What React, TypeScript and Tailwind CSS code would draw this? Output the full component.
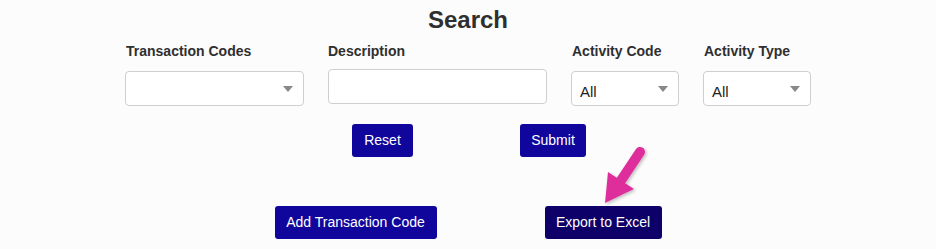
import React from "react"

function Caret() {
  return (
    <svg width="10" height="6" viewBox="0 0 10 6" className="absolute right-[10px] top-1/2 -translate-y-1/2">
      <path d="M0 0 L10 0 L5 6 Z" fill="#888" />
    </svg>
  )
}

function SelectBox({ width, value }: { width: string; value?: string }) {
  return (
    <div className={`relative ${width} h-[35px] rounded-[4px] border border-[#cfcfcf] bg-white`}>
      {value && (
        <span className="absolute left-[8px] top-[11px] text-[15px] leading-[18px] text-[#222]">{value}</span>
      )}
      <Caret />
    </div>
  )
}

export default function App() {
  const font = { fontFamily: '"Liberation Sans", Arial, sans-serif' }
  return (
    <div className="w-[936px] h-[249px] bg-[#fcfcfc] relative overflow-hidden" style={font}>
      <h1 className="text-center text-[24px] leading-[28px] font-bold text-[#2f2f2f] pt-[6px]">Search</h1>

      <div className="flex justify-center gap-6 mt-[9px]">
        <div className="flex flex-col">
          <label className="text-[14px] font-bold text-[#2f2f2f] leading-[16px] pl-[1px]">Transaction Codes</label>
          <div className="mt-[12px]">
            <SelectBox width="w-[179px]" />
          </div>
        </div>
        <div className="flex flex-col">
          <label className="text-[14px] font-bold text-[#2f2f2f] leading-[16px]">Description</label>
          <div className="mt-[10px] w-[219px] h-[35px] rounded-[4px] border border-[#cfcfcf] bg-white" />
        </div>
        <div className="flex flex-col">
          <label className="text-[14px] font-bold text-[#2f2f2f] leading-[16px] pl-[1px]">Activity Code</label>
          <div className="mt-[12px]">
            <SelectBox width="w-[108px]" value="All" />
          </div>
        </div>
        <div className="flex flex-col">
          <label className="text-[14px] font-bold text-[#2f2f2f] leading-[16px] pl-[1px]">Activity Type</label>
          <div className="mt-[12px]">
            <SelectBox width="w-[108px]" value="All" />
          </div>
        </div>
      </div>

      <div className="flex justify-center gap-[107px] mt-[18px] pl-[2px]">
        <button className="w-[61px] h-[33px] rounded-[3px] bg-[#10069c] text-white text-[14px]">Reset</button>
        <button className="w-[66px] h-[33px] rounded-[3px] bg-[#10069c] text-white text-[14px]">Submit</button>
      </div>

      <div className="flex justify-center gap-[108px] mt-[49px]">
        <button className="w-[162px] h-[33px] rounded-[3px] bg-[#10069c] text-white text-[14px]">Add Transaction Code</button>
        <button className="w-[117px] h-[33px] rounded-[3px] bg-[#0d0068] text-white text-[14px]">Export to Excel</button>
      </div>

      {/* annotation arrow */}
      <svg className="absolute left-[596px] top-[142px]" width="56" height="66" viewBox="0 0 56 66">
        <defs>
          <filter id="sh" x="-30%" y="-30%" width="160%" height="160%">
            <feDropShadow dx="1.5" dy="1.5" stdDeviation="1.5" floodColor="#000" floodOpacity="0.25" />
          </filter>
        </defs>
        <g filter="url(#sh)">
          <line x1="44" y1="10" x2="24" y2="40" stroke="#de2f9c" strokeWidth="10" strokeLinecap="round" />
          <path d="M9 61 L12 30 L38 47 Z" fill="#de2f9c" />
        </g>
      </svg>
    </div>
  )
}
